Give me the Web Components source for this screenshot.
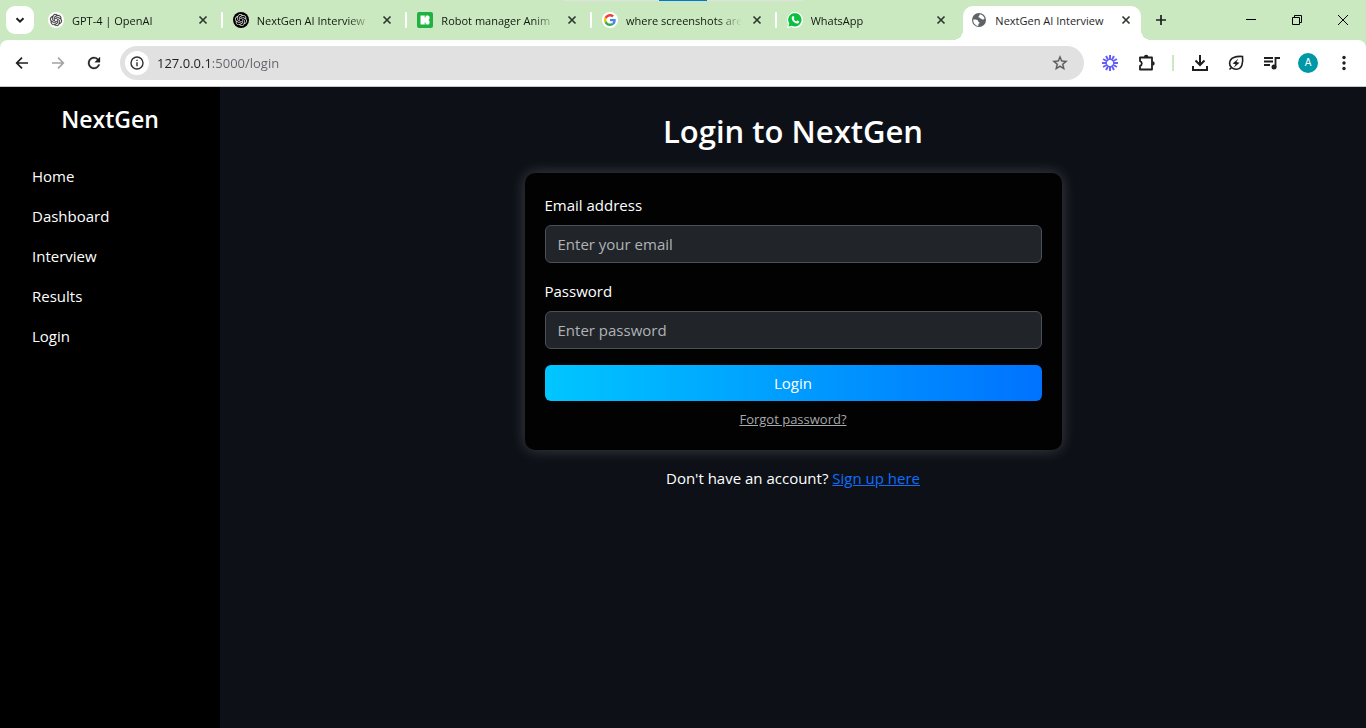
<!DOCTYPE html>
<html lang="en">
<head>
<meta charset="utf-8">
<title>NextGen AI Interview</title>
<style>
  html, body { margin: 0; min-height: 100vh; }
  body {
    display: flex;
    flex-direction: column;
    background: #0d1117;
    font-family: "Open Sans", "Noto Sans", sans-serif;
  }
  app-page { flex: 1; }
</style>
</head>
<body>
<browser-frame>
  <browser-tab slot="tab" label="GPT-4 | OpenAI" icon="openai"></browser-tab>
  <browser-tab slot="tab" label="NextGen AI Interview" icon="openaiDark"></browser-tab>
  <browser-tab slot="tab" label="Robot manager Anim" icon="icons8"></browser-tab>
  <browser-tab slot="tab" label="where screenshots are" icon="google"></browser-tab>
  <browser-tab slot="tab" label="WhatsApp" icon="whatsapp" bare></browser-tab>
  <browser-tab slot="tab" label="NextGen AI Interview" icon="globe" active></browser-tab>
</browser-frame>
<app-page>
  <side-nav slot="nav" heading="NextGen">
    <nav-link href="#home">Home</nav-link>
    <nav-link href="#dashboard">Dashboard</nav-link>
    <nav-link href="#interview">Interview</nav-link>
    <nav-link href="#results">Results</nav-link>
    <nav-link href="#login">Login</nav-link>
  </side-nav>
  <login-panel></login-panel>
</app-page>

<script>
const OPENAI = '<path d="M22.2819 9.8211a5.9847 5.9847 0 0 0-.5157-4.9108 6.0462 6.0462 0 0 0-6.5098-2.9A6.0651 6.0651 0 0 0 4.9807 4.1818a5.9847 5.9847 0 0 0-3.9977 2.9 6.0462 6.0462 0 0 0 .7427 7.0966 5.98 5.98 0 0 0 .511 4.9107 6.051 6.051 0 0 0 6.5146 2.9001A5.9847 5.9847 0 0 0 13.2599 24a6.0557 6.0557 0 0 0 5.7718-4.2058 5.9894 5.9894 0 0 0 3.9977-2.9001 6.0557 6.0557 0 0 0-.7475-7.0729zm-9.022 12.6081a4.4755 4.4755 0 0 1-2.8764-1.0408l.1419-.0804 4.7783-2.7582a.7948.7948 0 0 0 .3927-.6813v-6.7369l2.02 1.1686a.071.071 0 0 1 .038.052v5.5826a4.504 4.504 0 0 1-4.4945 4.4944zm-9.6607-4.1254a4.4708 4.4708 0 0 1-.5346-3.0137l.142.0852 4.783 2.7582a.7712.7712 0 0 0 .7806 0l5.8428-3.3685v2.3324a.0804.0804 0 0 1-.0332.0615L9.74 19.9502a4.4992 4.4992 0 0 1-6.1408-1.6464zM2.3408 7.8956a4.485 4.485 0 0 1 2.3655-1.9728V11.6a.7664.7664 0 0 0 .3879.6765l5.8144 3.3543-2.0201 1.1685a.0757.0757 0 0 1-.071 0l-4.8303-2.7865A4.504 4.504 0 0 1 2.3408 7.872zm16.5963 3.8558L13.1038 8.364 15.1192 7.2a.0757.0757 0 0 1 .071 0l4.8303 2.7913a4.4944 4.4944 0 0 1-.6765 8.1042v-5.6772a.79.79 0 0 0-.407-.667zm2.0107-3.0231l-.142-.0852-4.7735-2.7818a.7759.7759 0 0 0-.7854 0L9.409 9.2297V6.8974a.0662.0662 0 0 1 .0284-.0615l4.8303-2.7866a4.4992 4.4992 0 0 1 6.6802 4.66zM8.3065 12.863l-2.02-1.1638a.0804.0804 0 0 1-.038-.0567V6.0742a4.4992 4.4992 0 0 1 7.3757-3.4537l-.142.0805L8.704 5.459a.7948.7948 0 0 0-.3927.6813zm1.0976-2.3654l2.602-1.4998 2.6069 1.4998v2.9994l-2.5974 1.4997-2.6067-1.4997Z"/>';

/* name: [size in px, viewBox side, markup] */
const ICONS = {
  openai: [16, 16, '<circle cx="8" cy="8" r="8" fill="#fff"/><g fill="#333" stroke="#333" stroke-width=".5" transform="translate(2 2) scale(.5)">' + OPENAI + '</g>'],
  openaiDark: [16, 16, '<circle cx="8" cy="8" r="8" fill="#000"/><g fill="#ddd" transform="translate(2 2) scale(.5)">' + OPENAI + '</g>'],
  icons8: [16, 16, '<rect width="16" height="16" rx="2" fill="#1fb141"/><path d="M3.500 3.500h4.500v9h-4.500z" fill="#fff"/><rect x="8" y="3.500" width="4.500" height="4.500" rx="1.500" fill="#fff"/><rect x="8" y="8" width="4.500" height="4.500" rx="1.500" fill="#fff"/><path d="M7 5.500h3.500v5H7z" fill="#fff"/><path d="M7.700 3.500h.8v2h-.8zM7.700 10.500h.8v2h-.8z" fill="#1fb141"/>'],
  google: [16, 64, '<circle cx="32" cy="32" r="32" fill="#fff"/><g transform="translate(8 8)"><path fill="#EA4335" d="M24 9.500c3.540 0 6.710 1.220 9.210 3.600l6.850-6.850C35.900 2.380 30.470 0 24 0 14.620 0 6.510 5.380 2.560 13.220l7.980 6.190C12.430 13.720 17.740 9.500 24 9.500z"/><path fill="#4285F4" d="M46.980 24.550c0-1.570-.15-3.090-.38-4.550H24v9.020h12.940c-.58 2.960-2.260 5.480-4.780 7.180l7.730 6c4.510-4.180 7.090-10.360 7.090-17.650z"/><path fill="#FBBC05" d="M10.530 28.590c-.48-1.450-.76-2.990-.76-4.590s.27-3.140.76-4.590l-7.980-6.190C.92 16.460 0 20.120 0 24c0 3.880.92 7.540 2.560 10.780l7.970-6.190z"/><path fill="#34A853" d="M24 48c6.480 0 11.930-2.130 15.890-5.810l-7.730-6c-2.150 1.450-4.920 2.300-8.160 2.300-6.260 0-11.570-4.220-13.470-9.910l-7.980 6.190C6.510 42.620 14.620 48 24 48z"/></g>'],
  whatsapp: [16, 16, '<path d="M0 16l1.100-4A8 8 0 1 1 4.200 15z" fill="#fff"/><path d="M1.400 14.600l.9-3A6.700 6.700 0 1 1 4.800 13.800z" fill="#0bbf3f"/><path d="M5.600 4.200c.3-.3.900-.3 1.100.1l.6 1.400c.1.300 0 .5-.1.700l-.5.600c.6 1.200 1.400 1.900 2.600 2.500l.7-.8c.2-.2.400-.2.600-.1l1.400.7c.3.200.3.400.2.800-.2 1-1.300 1.600-2.200 1.500C7.400 11.200 5 8.800 4.700 6.400c-.1-.9.300-1.700.9-2.200z" fill="#fff"/>'],
  globe: [16, 16, '<circle cx="8" cy="8" r="7" fill="#5f6368"/><path d="M8.600 2.200c2.600.3 4.600 2.200 5 4.600-.9.200-1 .8-1.700.8-.8 0-.9-.8-1.800-.8-1.200 0-.8-1.200-1.800-1.200-.8 0-1.200-.6-.7-1.200.4-.5 1-.5 1-2.200zM2.200 7.400c1.400 0 3.600-.2 4.600.8.600.7 0 1.500.9 1.700 1.200.2 1 1.300.3 1.600-.5.200-.7.900-.7 2.400-2.700-.2-5.300-2.800-5.100-6.500z" fill="#fff"/>'],
  close: [16, 16, '<path d="M4.500 4.500l7 7M11.500 4.500l-7 7" stroke="#303830" stroke-width="1.700" fill="none"/>'],
  chevron: [16, 16, '<path d="M4.500 6.200L8 9.700l3.500-3.500" stroke="#1f1f1f" stroke-width="2" fill="none"/>'],
  plus: [16, 16, '<path d="M8 3v10M3 8h10" stroke="#1f1f1f" stroke-width="1.700" fill="none"/>'],
  minimize: [12, 12, '<path d="M1 5.500h10" stroke="#000" fill="none"/>'],
  restore: [12, 12, '<path d="M1.500 3.500h7v7h-7zM3.500 3.500v-2h7v7h-2" stroke="#000" fill="none"/>'],
  windowClose: [12, 12, '<path d="M1 1l10 10M11 1L1 11" stroke="#000" fill="none"/>'],
  back: [16, 16, '<path d="M14 8H3M8 2.700L2.700 8 8 13.300" stroke="#1f1f1f" stroke-width="1.700" fill="none"/>'],
  forward: [16, 16, '<path d="M2 8h11M8 2.700L13.300 8 8 13.300" stroke="#a3a3a3" stroke-width="1.700" fill="none"/>'],
  reload: [18, 24, '<path d="M17.650 6.350A7.958 7.958 0 0 0 12 4c-4.420 0-7.990 3.580-7.990 8s3.570 8 7.990 8c3.730 0 6.840-2.550 7.730-6h-2.080A5.990 5.990 0 0 1 12 18c-3.310 0-6-2.690-6-6s2.690-6 6-6c1.660 0 3.140.69 4.220 1.780L13 11h7V4l-2.350 2.350z" fill="#1f1f1f" stroke="#1f1f1f" stroke-width=".4"/>'],
  info: [14, 14, '<circle cx="7" cy="7" r="6" stroke="#303030" stroke-width="1.400" fill="none"/><path d="M7 6.200v4M7 3.700v1.400" stroke="#303030" stroke-width="1.400"/>'],
  star: [18, 24, '<path d="M22 9.240l-7.190-.62L12 2 9.190 8.630 2 9.240l5.460 4.730L5.820 21 12 17.270 18.180 21l-1.630-7.030L22 9.240zM12 15.400l-3.760 2.270 1-4.280-3.320-2.880 4.380-.38L12 6.100l1.710 4.040 4.380.38-3.320 2.880 1 4.280L12 15.400z" fill="#5a5a5a" stroke="#5a5a5a" stroke-width=".4"/>'],
  burst: [18, 18, '<g stroke="#645ff8" stroke-width="2" fill="none"><path d="M9 1v5M9 12v5M1 9h5M12 9h5M5 2.070l2.500 4.330M10.500 11.600l2.500 4.330M13 2.070l-2.500 4.330M7.500 11.600L5 15.930M2.070 5L6.400 7.500M11.600 10.500l4.330 2.500M2.070 13L6.400 10.500M11.600 7.500L15.930 5"/></g>'],
  puzzle: [18, 18, '<path d="M3 3.500h12v12H3v-3.600a2.500 2.500 0 0 0 0-4.800z" stroke="#1f1f1f" stroke-width="1.800" stroke-linejoin="round" fill="none"/><path d="M7 3a2.200 2.200 0 0 1 4.400 0zM15.500 7.200a2.200 2.200 0 0 1 0 4.400z" fill="#1f1f1f"/>'],
  download: [18, 18, '<path d="M9 1v9.500M4.500 6.500L9 11l4.500-4.500M2 12v4h14v-4" stroke="#1f1f1f" stroke-width="2" fill="none"/>'],
  leaf: [18, 18, '<path d="M2.500 15.500l2-2M15.500 2.500C9 2 3 3.700 2.600 9c-.3 4 3.400 6.500 7 6.200 5.700-.5 6.600-6.700 5.900-12.700z" stroke="#1f1f1f" stroke-width="1.600" fill="none"/><path d="M11.300 4.800L5.600 9.500l3 .8-1.900 3.400 5.800-4.900-3-.7z" fill="#1f1f1f"/>'],
  music: [18, 18, '<path d="M1 4h9M1 7.500h9M1 11h6M12.500 13.500V4H17" stroke="#1f1f1f" stroke-width="1.800" fill="none"/><circle cx="11" cy="13" r="2.500" fill="#1f1f1f"/>'],
  dots: [18, 18, '<g fill="#1f1f1f"><circle cx="9" cy="3.500" r="1.700"/><circle cx="9" cy="9" r="1.700"/><circle cx="9" cy="14.500" r="1.700"/></g>']
};

class ShadowElement extends HTMLElement {
  render(html) {
    this.attachShadow({ mode: 'open' }).innerHTML = html;
  }
}

customElements.define('ui-icon', class extends ShadowElement {
  connectedCallback() {
    if (this.shadowRoot) return;
    const [size, box, markup] = ICONS[this.getAttribute('name')];
    this.render(`<style>:host{display:block;flex:none}svg{display:block}</style>
      <svg width="${size}" height="${size}" viewBox="0 0 ${box} ${box}" aria-hidden="true">${markup}</svg>`);
  }
});

customElements.define('browser-tab', class extends ShadowElement {
  connectedCallback() {
    if (this.shadowRoot) return;
    this.render(`
      <style>
        :host { display: flex; flex: 1; min-width: 0; align-items: stretch; }
        .body {
          position: relative; flex: 1; min-width: 0; display: flex; align-items: center;
          padding: 0 7px 6px 8px; border-radius: 10px 10px 0 0; box-sizing: border-box;
        }
        .title {
          flex: 1; min-width: 0; margin: 0 7px 0 8px; padding-top: 2px; overflow: hidden; white-space: nowrap;
          font-size: 11px; line-height: 16px; color: #101810;
          mask-image: linear-gradient(to right, #000 calc(100% - 24px), transparent);
        }
        button { display: block; padding: 0; border: 0; background: none; }
        .divider { flex: none; width: 2px; height: 16px; margin: 6px 2px 0 3px; border-radius: 1px; background: #fff; }
        :host([active]) .body { background: #fff; }
        :host([active]) .title { mask-image: none; color: #1f1f1f; }
        :host([active]) .divider, :host([bare]) .divider { visibility: hidden; }
        :host([active]) .body::before, :host([active]) .body::after {
          content: ""; position: absolute; bottom: 0; width: 10px; height: 10px;
        }
        :host([active]) .body::before { right: 100%; background: radial-gradient(circle at 0 0, transparent 10px, #fff 10px); }
        :host([active]) .body::after { left: 100%; background: radial-gradient(circle at 100% 0, transparent 10px, #fff 10px); }
      </style>
      <div class="body">
        <ui-icon name="${this.getAttribute('icon')}"></ui-icon>
        <span class="title">${this.getAttribute('label')}</span>
        <button type="button" aria-label="Close tab"><ui-icon name="close"></ui-icon></button>
      </div>
      <span class="divider"></span>`);
  }
});

customElements.define('tool-button', class extends ShadowElement {
  connectedCallback() {
    if (this.shadowRoot) return;
    this.render(`
      <style>
        :host { display: block; flex: none; }
        button {
          display: flex; align-items: center; justify-content: center;
          width: 28px; height: 28px; padding: 0; border: 0; background: none;
        }
      </style>
      <button type="button" aria-label="${this.getAttribute('label')}"><ui-icon name="${this.getAttribute('icon')}"></ui-icon></button>`);
  }
});

customElements.define('address-bar', class extends ShadowElement {
  connectedCallback() {
    if (this.shadowRoot) return;
    this.render(`
      <style>
        :host {
          display: flex; flex: 1; min-width: 0; align-items: center; height: 34px; margin: 0 4px;
          padding: 0 10px 0 5px; border-radius: 17px; background: #e1e1e1; box-sizing: border-box;
        }
        .info {
          flex: none; display: flex; align-items: center; justify-content: center;
          width: 24px; height: 24px; padding: 0; border: 0; border-radius: 12px; background: #fff;
        }
        /* The host part of the address is darker than its port and path. */
        input {
          flex: 1; min-width: 0; height: 20px; margin: 0 8px; padding: 0; border: 0; outline: 0;
          font: 13px/20px "Open Sans", "Noto Sans", sans-serif; color: #1f1f1f;
          background: linear-gradient(to right, #1f1f1f 54px, #5f6368 54px);
          -webkit-background-clip: text; background-clip: text; -webkit-text-fill-color: transparent;
        }
      </style>
      <button type="button" class="info" aria-label="Site information"><ui-icon name="info"></ui-icon></button>
      <input type="text" aria-label="Address" value="127.0.0.1:5000/login" spellcheck="false">
      <tool-button icon="star" label="Bookmark"></tool-button>`);
  }
});

customElements.define('browser-frame', class extends ShadowElement {
  connectedCallback() {
    if (this.shadowRoot) return;
    this.render(`
      <style>
        :host { display: block; position: relative; background: #cbe9c0; }
        .strip { display: flex; align-items: stretch; height: 40px; box-sizing: border-box; padding-top: 6px; }
        .tabs { display: flex; flex: 0 1 1108px; min-width: 0; margin-left: 6px; }
        button { flex: none; display: flex; align-items: center; justify-content: center; padding: 0; border: 0; background: none; }
        .search { width: 28px; height: 28px; margin-left: 6px; border-radius: 9px; background: #fff; }
        .new { width: 26px; height: 28px; }
        .window { display: flex; margin-left: auto; }
        .window button { width: 46px; height: 28px; }
        .bar {
          display: flex; align-items: center; gap: 8px; height: 47px; box-sizing: border-box;
          padding: 0 8px; border-bottom: 1px solid #c8c8c8; border-radius: 8px 8px 0 0; background: #fff;
        }
        .rule { flex: none; width: 2px; height: 16px; margin: 0 4px; background: #cbe9c0; }
        .avatar { width: 28px; height: 28px; }
        .avatar span {
          width: 20px; height: 20px; border-radius: 10px; background: #0097a7; color: #fff;
          font-size: 10px; line-height: 20px; text-align: center;
        }
        .progress {
          position: absolute; top: 0; left: 563px; width: 240px; height: 1px;
          background: linear-gradient(to right, #e0e0e0 96px, #0078d7 96px, #0078d7 144px, #e0e0e0 144px);
        }
      </style>
      <div class="strip">
        <button type="button" class="search" aria-label="Search tabs"><ui-icon name="chevron"></ui-icon></button>
        <div class="tabs"><slot name="tab"></slot></div>
        <button type="button" class="new" aria-label="New tab"><ui-icon name="plus"></ui-icon></button>
        <div class="window">
          <button type="button" aria-label="Minimize"><ui-icon name="minimize"></ui-icon></button>
          <button type="button" aria-label="Restore"><ui-icon name="restore"></ui-icon></button>
          <button type="button" aria-label="Close"><ui-icon name="windowClose"></ui-icon></button>
        </div>
      </div>
      <div class="bar">
        <tool-button icon="back" label="Back"></tool-button>
        <tool-button icon="forward" label="Forward"></tool-button>
        <tool-button icon="reload" label="Reload"></tool-button>
        <address-bar></address-bar>
        <tool-button icon="burst" label="Extension"></tool-button>
        <tool-button icon="puzzle" label="Extensions"></tool-button>
        <span class="rule"></span>
        <tool-button icon="download" label="Downloads"></tool-button>
        <tool-button icon="leaf" label="Energy saver"></tool-button>
        <tool-button icon="music" label="Media controls"></tool-button>
        <button type="button" class="avatar" aria-label="Profile"><span>A</span></button>
        <tool-button icon="dots" label="Menu"></tool-button>
      </div>
      <div class="progress"></div>`);
  }
});

customElements.define('app-page', class extends ShadowElement {
  connectedCallback() {
    if (this.shadowRoot) return;
    this.render(`
      <style>
        :host { display: flex; align-items: stretch; background: #0d1117; color: #fff; }
        aside { flex: none; width: 220px; background: #000; }
        main { flex: 1; min-width: 0; padding: 24px 36px; box-sizing: border-box; }
      </style>
      <aside><slot name="nav"></slot></aside>
      <main><slot></slot></main>`);
  }
});

customElements.define('side-nav', class extends ShadowElement {
  connectedCallback() {
    if (this.shadowRoot) return;
    this.render(`
      <style>
        :host { display: block; padding: 16px; }
        h2 { margin: 0 0 21px; font-size: 23px; line-height: 32px; font-weight: 600; text-align: center; }
        nav { display: flex; flex-direction: column; }
      </style>
      <h2>${this.getAttribute('heading')}</h2>
      <nav><slot></slot></nav>`);
  }
});

customElements.define('nav-link', class extends ShadowElement {
  connectedCallback() {
    if (this.shadowRoot) return;
    this.render(`
      <style>
        :host { display: block; }
        a { display: block; padding: 8px 16px; font-size: 15px; line-height: 24px; color: #fff; text-decoration: none; }
      </style>
      <a href="${this.getAttribute('href')}"><slot></slot></a>`);
  }
});

customElements.define('form-field', class extends ShadowElement {
  connectedCallback() {
    if (this.shadowRoot) return;
    this.render(`
      <style>
        :host { display: block; margin-bottom: 16px; }
        label { display: block; margin-bottom: 8px; font-size: 15px; line-height: 24px; }
        input {
          display: block; width: 100%; height: 38px; box-sizing: border-box; padding: 6px 12px;
          border: 1px solid #495057; border-radius: 6px; background: #212529; color: #dee2e6;
          font: 15px/24px "Open Sans", "Noto Sans", sans-serif;
        }
        input::placeholder { color: #afb3b7; opacity: 1; }
      </style>
      <label for="field">${this.getAttribute('label')}</label>
      <input id="field" type="${this.getAttribute('type')}" placeholder="${this.getAttribute('hint')}">`);
  }
});

customElements.define('login-panel', class extends ShadowElement {
  connectedCallback() {
    if (this.shadowRoot) return;
    this.render(`
      <style>
        :host { display: flex; flex-direction: column; align-items: center; }
        h1 { margin: 0 0 22px; font-size: 31px; line-height: 40px; font-weight: 600; text-align: center; }
        form {
          width: 50%; box-sizing: border-box; padding: 20px; border-radius: 10px;
          background: #020203; box-shadow: 0 0 15px rgba(255, 255, 255, .2);
        }
        button {
          display: block; width: 100%; height: 36px; padding: 0; border: 0; border-radius: 6px;
          background: linear-gradient(to right, #00c6ff, #0072ff); color: #fff;
          font: 15px/24px "Open Sans", "Noto Sans", sans-serif;
        }
        .forgot { margin-top: 8px; font-size: 13px; line-height: 21px; text-align: center; }
        .forgot a { color: #a6a8ab; }
        p { margin: 16px 0 0; font-size: 15px; line-height: 24px; }
        p a { color: #0d6efd; }
      </style>
      <h1>Login to NextGen</h1>
      <form>
        <form-field label="Email address" type="email" hint="Enter your email"></form-field>
        <form-field label="Password" type="password" hint="Enter password"></form-field>
        <button type="submit">Login</button>
        <div class="forgot"><a href="#forgot">Forgot password?</a></div>
      </form>
      <p>Don't have an account? <a href="#signup">Sign up here</a></p>`);
  }
});
</script>
</body>
</html>
